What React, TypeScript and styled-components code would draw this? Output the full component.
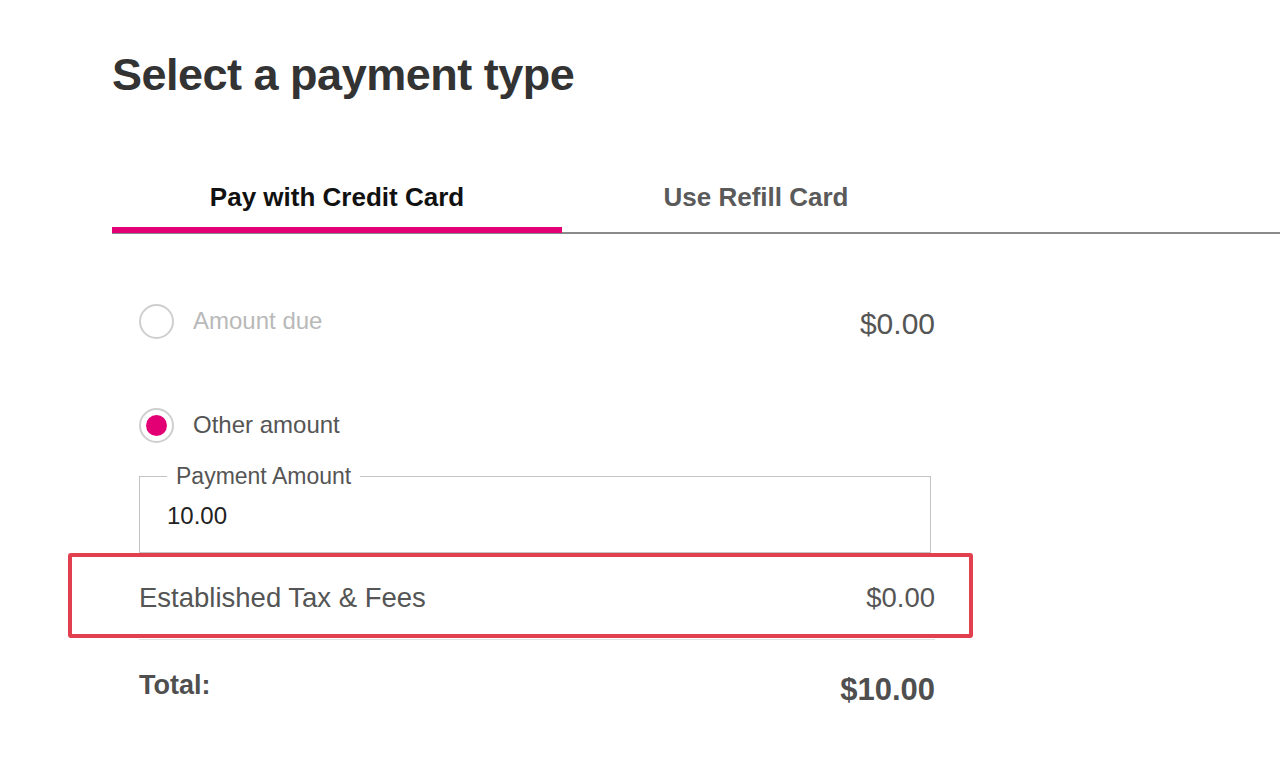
import styled, { createGlobalStyle } from "styled-components";

const GlobalStyle = createGlobalStyle`
  body {
    margin: 0;
    background: #fff;
    font-family: "Liberation Sans", Arial, Helvetica, sans-serif;
  }
`;

const MAGENTA = "#e20074";

export default function App() {
  return (
    <>
      <GlobalStyle />
      <Page>
        <Title>Select a payment type</Title>
        <TabBar>
          <Tab $active $width={450}>Pay with Credit Card</Tab>
          <Tab $width={388}>Use Refill Card</Tab>
        </TabBar>
        <Content>
          <OptionRow>
            <RadioLabel $disabled>
              <Radio />
              Amount due
            </RadioLabel>
            <Amount>$0.00</Amount>
          </OptionRow>
          <OptionRow>
            <RadioLabel>
              <Radio $checked />
              Other amount
            </RadioLabel>
          </OptionRow>
          <Field>
            <Legend>Payment Amount</Legend>
            <FieldValue>10.00</FieldValue>
          </Field>
          <FeeRow>
            <FeeLabel>Established Tax &amp; Fees</FeeLabel>
            <FeeLabel>$0.00</FeeLabel>
            <Highlight />
          </FeeRow>
          <TotalRow>
            <TotalLabel>Total:</TotalLabel>
            <TotalValue>$10.00</TotalValue>
          </TotalRow>
        </Content>
      </Page>
    </>
  );
}

const Page = styled.div`
  padding: 48px 0 40px 112px;
`;

const Title = styled.h1`
  margin: 0;
  font-size: 45px;
  line-height: 54px;
  font-weight: 700;
  color: #333;
  letter-spacing: -0.5px;
`;

const TabBar = styled.div`
  display: flex;
  margin-top: 73px;
  border-bottom: 2px solid #8a8a8a;
`;

const Tab = styled.div<{ $active?: boolean; $width: number }>`
  width: ${(p) => p.$width}px;
  text-align: center;
  font-size: 26px;
  font-weight: 700;
  line-height: 30px;
  padding-top: 7px;
  padding-bottom: 15px;
  color: ${(p) => (p.$active ? "#111" : "#5a5a5a")};
  border-bottom: 6px solid ${(p) => (p.$active ? MAGENTA : "transparent")};
  margin-bottom: -1px;
`;

const Content = styled.div`
  width: 796px;
  margin-left: 27px;
  padding-top: 67px;
`;

const OptionRow = styled.div`
  display: flex;
  justify-content: space-between;
  align-items: center;
  height: 40px;
  margin-bottom: 64px;
  &:nth-of-type(2) {
    margin-bottom: 18px;
  }
`;

const RadioLabel = styled.label<{ $disabled?: boolean }>`
  display: flex;
  align-items: center;
  gap: 19px;
  font-size: 24px;
  color: ${(p) => (p.$disabled ? "#b9b9b9" : "#555")};
`;

const Radio = styled.span<{ $checked?: boolean }>`
  box-sizing: border-box;
  width: 35px;
  height: 35px;
  border-radius: 50%;
  border: 2px solid #cfcfcf;
  display: flex;
  align-items: center;
  justify-content: center;
  &::after {
    content: "";
    width: 21px;
    height: 21px;
    border-radius: 50%;
    background: ${(p) => (p.$checked ? MAGENTA : "transparent")};
  }
`;

const Amount = styled.span`
  font-size: 30px;
  color: #555;
  margin-top: 6px;
`;

const Field = styled.fieldset`
  margin: 0;
  width: 792px;
  box-sizing: border-box;
  height: 90px;
  padding: 0 0 0 27px;
  border: 1px solid #c4c4c4;
`;

const Legend = styled.legend`
  font-size: 23px;
  color: #555;
  padding: 0 9px;
  margin-left: 0;
`;

const FieldValue = styled.div`
  font-size: 24px;
  color: #222;
  margin-top: 12px;
`;

const FeeRow = styled.div`
  position: relative;
  display: flex;
  justify-content: space-between;
  align-items: center;
  height: 84px;
  margin-top: 2px;
  border-bottom: 1px solid #e2e2e2;
`;

const FeeLabel = styled.span`
  font-size: 27.5px;
  color: #555;
  margin-top: 2px;
`;

const Highlight = styled.div`
  position: absolute;
  left: -71px;
  right: -38px;
  top: -2px;
  bottom: 1px;
  border: 4px solid #e2404f;
  border-radius: 3px;
  pointer-events: none;
`;

const TotalRow = styled.div`
  display: flex;
  justify-content: space-between;
  align-items: flex-start;
  padding-top: 30px;
`;

const TotalLabel = styled.span`
  font-size: 27px;
  font-weight: 700;
  color: #4f4f4f;
`;

const TotalValue = styled.span`
  font-size: 31px;
  font-weight: 700;
  color: #4f4f4f;
  margin-top: 2px;
`;
